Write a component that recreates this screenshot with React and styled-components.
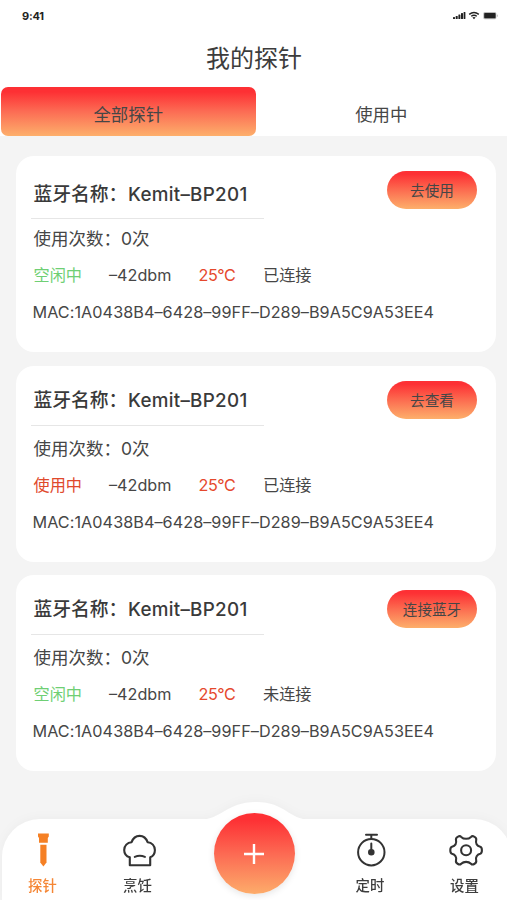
import React, { useState } from "react";
import styled, { createGlobalStyle } from "styled-components";

const GlobalStyle = createGlobalStyle`
  * {
    box-sizing: border-box;
  }

  body {
    margin: 0;
    background-color: #f4f4f4;
    font-family: Inter, "Noto Sans CJK SC", sans-serif;
    color: #464646;
  }

  button {
    border: none;
    padding: 0;
    background: none;
    font-family: inherit;
    color: inherit;
  }
`;

const Phone = styled.div`
  width: 507px;
  height: 900px;
  display: flex;
  flex-direction: column;
  overflow: hidden;
  background-color: #f4f4f4;
`;

const Header = styled.header`
  height: 136px;
  flex-shrink: 0;
  background-color: white;
`;

const StatusBar = styled.div`
  height: 31px;
  padding: 0 9px 0 22px;
  display: flex;
  justify-content: space-between;
  align-items: center;
`;

const Time = styled.span`
  padding-top: 1px;
  font-size: 11px;
  font-weight: 700;
  line-height: 31px;
  letter-spacing: -0.2px;
  color: #222;
`;

const Title = styled.h1`
  height: 56px;
  margin: 0;
  padding-left: 1px;
  font-size: 24px;
  font-weight: 400;
  line-height: 55px;
  text-align: center;
  color: #3c3c3c;
`;

const Tabs = styled.div`
  height: 49px;
  padding-left: 1px;
  display: flex;
`;

const Tab = styled.button`
  width: ${(props) => (props.$active ? "254.5px" : "251.5px")};
  height: 49px;
  padding-top: 6px;
  border-radius: 7px;
  font-size: 17.4px;
  line-height: 43px;
  background: ${(props) =>
    props.$active
      ? "linear-gradient(#fd3034 10%, #fc6c54 50%, #fdaf6b)"
      : "white"};
`;

const CardList = styled.main`
  padding: 20px 11px 0 16px;
  display: flex;
  flex-direction: column;
  gap: 13.7px;
  flex: 1;
`;

const Card = styled.article`
  height: 196px;
  flex-shrink: 0;
  padding: 0 19px 0 15px;
  border-radius: 18px;
  background-color: white;
`;

const CardTop = styled.div`
  height: 63px;
  display: flex;
  justify-content: space-between;
  align-items: flex-start;
`;

const Name = styled.h2`
  width: 233px;
  height: ${(props) => (props.$tall ? 63 : 60)}px;
  margin: 0;
  padding-left: 2.5px;
  border-bottom: 1px solid #e6e6e6;
  font-size: 18.8px;
  font-weight: 500;
  line-height: ${(props) => (props.$tall ? 77 : 70)}px;
  white-space: nowrap;
  color: #3a3a3a;
`;

const Latin = styled.span`
  margin-left: 0.5px;
  letter-spacing: ${(props) => props.$spacing || 0}px;
`;

const Action = styled.button`
  width: 90px;
  height: 38px;
  margin-top: 15px;
  border-radius: 19px;
  font-size: 14.6px;
  line-height: 38px;
  padding-top: 1px;
  background: linear-gradient(#fd3034 8%, #fc6c50 50%, #fdaf6b);
`;

const Usage = styled.p`
  height: 37px;
  margin: 0;
  padding-left: 2.5px;
  font-size: 17.5px;
  line-height: 39px;
`;

const Stats = styled.div`
  height: 37px;
  padding-left: 2.5px;
  display: grid;
  grid-template-columns: 75.5px 89.5px 64.5px auto;
  font-size: 16.2px;
  line-height: 39px;
`;

const Stat = styled.span`
  color: ${(props) => props.$color || "inherit"};
  letter-spacing: ${(props) => props.$spacing || 0}px;
`;

const Mac = styled.p`
  margin: 0;
  padding-left: 1.5px;
  font-size: 16.2px;
  letter-spacing: 0.06px;
  line-height: 38px;
  white-space: nowrap;
`;

const NavBar = styled.nav`
  position: relative;
  width: 510px;
  height: 81px;
  flex-shrink: 0;
  margin-left: 2px;
  display: grid;
  grid-template-columns: 81px 109px 124px 108px 81px;
  border-radius: 38px 38px 0 0;
  background-color: white;
  filter: drop-shadow(0 -1px 5px rgba(0, 0, 0, 0.03));
`;

const Bump = styled.svg`
  position: absolute;
  left: 196px;
  top: -17px;
`;

const NavItem = styled.button`
  display: flex;
  flex-direction: column;
  align-items: center;
  padding-top: 13px;
  font-size: 14.4px;
  font-weight: 500;
  line-height: 20px;
  color: ${(props) => (props.$active ? "#f58634" : "#3d3d3d")};

  svg {
    flex-shrink: 0;
    margin-bottom: 7.5px;
  }
`;

const AddButton = styled.button`
  position: relative;
  width: 81px;
  height: 81px;
  margin: -6px auto 0;
  display: flex;
  justify-content: center;
  align-items: center;
  border-radius: 50%;
  background: linear-gradient(#fd3034 8%, #fc6c54 52%, #fdac6a);
  box-shadow: 0 2px 7px rgba(0, 0, 0, 0.1);
`;

const StatusIcons = () => (
  <svg width="45" height="12" viewBox="0 1 45 12" fill="#222">
    <rect x="0" y="8" width="2" height="2" rx=".5" />
    <rect x="2.7" y="7" width="2" height="3" rx=".5" />
    <rect x="5.4" y="5.4" width="2" height="4.6" rx=".5" />
    <rect x="8" y="4" width="2" height="6" rx=".5" />
    <rect x="10.6" y="3" width="1.8" height="7" rx=".5" />
    <g fill="none" stroke="#222" strokeWidth="1.4">
      <path d="M16.2 5.4Q21 1.6 25.8 5.4" />
      <path d="M18.2 7.2Q21 5.2 23.8 7.2" />
    </g>
    <path d="M19.4 8.5Q21 7.4 22.6 8.5L21 10.2Z" />
    <rect x="30.3" y="3" width="13" height="7.2" rx="1.5" fill="#bbb" />
    <rect x="31.2" y="4" width="11.4" height="5.2" rx=".8" />
    <rect x="43.8" y="5.4" width="1" height="2.4" rx=".5" fill="#bbb" />
  </svg>
);

const ProbeIcon = () => (
  <svg width="36" height="36" viewBox="0 0 36 36" fill="#f58025">
    <path d="M13 1.5H23.8V4.5L22.8 6V10.8H14V6L13 4.5Z" />
    <path d="M15.3 12.8H21.5V30.5L18.4 34.5L15.3 30.5Z" />
  </svg>
);

const ChefIcon = () => (
  <svg
    width="36"
    height="36"
    viewBox="0 0 36 36"
    fill="none"
    stroke="#333"
    strokeWidth="2.1"
    strokeLinejoin="round"
    strokeLinecap="round"
  >
    <path d="M9.8 33.2V25.3C6.4 24.3 4.2 21.4 4.2 17.9C4.2 13.8 7.3 10.5 11.6 10.2C13 6.2 16 3.9 19.6 3.9C23.2 3.9 26.2 6.2 27.6 10.2C31.8 10.5 34.9 13.8 34.9 17.9C34.9 21.4 32.8 24.3 30.2 25.3V33.2Z" />
    <path d="M14.8 24.9Q19.8 22.7 24.9 24.9" />
  </svg>
);

const TimerIcon = () => (
  <svg
    width="36"
    height="36"
    viewBox="0 0 36 36"
    fill="none"
    stroke="#333"
    strokeWidth="2"
    strokeLinecap="round"
  >
    <path d="M14 2.8H25M19.3 3V6.5M19.3 11.5V20" />
    <circle cx="19.3" cy="20.2" r="13.2" />
    <circle cx="19.3" cy="20.2" r="2.3" fill="#333" />
  </svg>
);

const GearIcon = () => (
  <svg
    width="36"
    height="36"
    viewBox="0 0 36 36"
    fill="none"
    stroke="#333"
    strokeWidth="2.1"
    strokeLinejoin="round"
  >
    <path d="M11 4.6C12.3 3.8 13.3 3.9 14.2 4.9C16.8 7.4 21.4 7.4 24 4.9C24.9 3.9 25.9 3.8 27.2 4.6C28.9 5.5 29.6 6.5 29.2 8.1C28.3 11.4 30 14 33.2 14.8C34.6 15.2 34.9 16 34.9 18.3C34.9 20.6 34.6 21.4 33.2 21.8C30 22.6 28.3 25.2 29.2 28.5C29.6 30.1 28.9 31.1 27.2 32C25.9 32.8 24.9 32.7 24 31.7C21.4 29.2 16.8 29.2 14.2 31.7C13.3 32.7 12.3 32.8 11 32C9.3 31.1 8.6 30.1 9 28.5C9.9 25.2 8.2 22.6 5 21.8C3.6 21.4 3.3 20.6 3.3 18.3C3.3 16 3.6 15.2 5 14.8C8.2 14 9.9 11.4 9 8.1C8.6 6.5 9.3 5.5 11 4.6Z" />
    <circle cx="19.1" cy="18.3" r="5" />
  </svg>
);

const probes = [
  { id: 1, state: "空闲中", color: "#6fcf74", link: "已连接", action: "去使用" },
  { id: 2, state: "使用中", color: "#e0492c", link: "已连接", action: "去查看" },
  { id: 3, state: "空闲中", color: "#6fcf74", link: "未连接", action: "连接蓝牙" },
];

function ProbeCard({ probe, first }) {
  return (
    <Card>
      <CardTop>
        <Name $tall={first}>
          蓝牙名称：<Latin $spacing={0.3}>Kemit–BP201</Latin>
        </Name>
        <Action>{probe.action}</Action>
      </CardTop>
      <Usage>使用次数：0次</Usage>
      <Stats>
        <Stat $color={probe.color}>{probe.state}</Stat>
        <Stat>–42dbm</Stat>
        <Stat $color="#e5482d" $spacing={-0.45}>
          25°C
        </Stat>
        <Stat>{probe.link}</Stat>
      </Stats>
      <Mac>MAC:1A0438B4–6428–99FF–D289–B9A5C9A53EE4</Mac>
    </Card>
  );
}

function App() {
  const [tab, setTab] = useState("all");

  return (
    <>
      <GlobalStyle />
      <Phone>
        <Header>
          <StatusBar>
            <Time>9:41</Time>
            <StatusIcons />
          </StatusBar>
          <Title>我的探针</Title>
          <Tabs>
            <Tab $active={tab === "all"} onClick={() => setTab("all")}>
              全部探针
            </Tab>
            <Tab $active={tab === "using"} onClick={() => setTab("using")}>
              使用中
            </Tab>
          </Tabs>
        </Header>
        <CardList>
          {probes.map((probe, index) => (
            <ProbeCard key={probe.id} probe={probe} first={index === 0} />
          ))}
        </CardList>
        <NavBar>
          <Bump width="114" height="18" viewBox="0 0 114 18" fill="white">
            <path d="M0 18C24 18 28 0 58 0C88 0 90 18 114 18Z" />
          </Bump>
          <NavItem $active>
            <ProbeIcon />
            探针
          </NavItem>
          <NavItem>
            <ChefIcon />
            烹饪
          </NavItem>
          <AddButton>
            <svg width="22" height="22" viewBox="0 0 22 22" stroke="white">
              <path d="M11 1V21M1 11H21" strokeWidth="2.4" />
            </svg>
          </AddButton>
          <NavItem>
            <TimerIcon />
            定时
          </NavItem>
          <NavItem>
            <GearIcon />
            设置
          </NavItem>
        </NavBar>
      </Phone>
    </>
  );
}

export default App;
